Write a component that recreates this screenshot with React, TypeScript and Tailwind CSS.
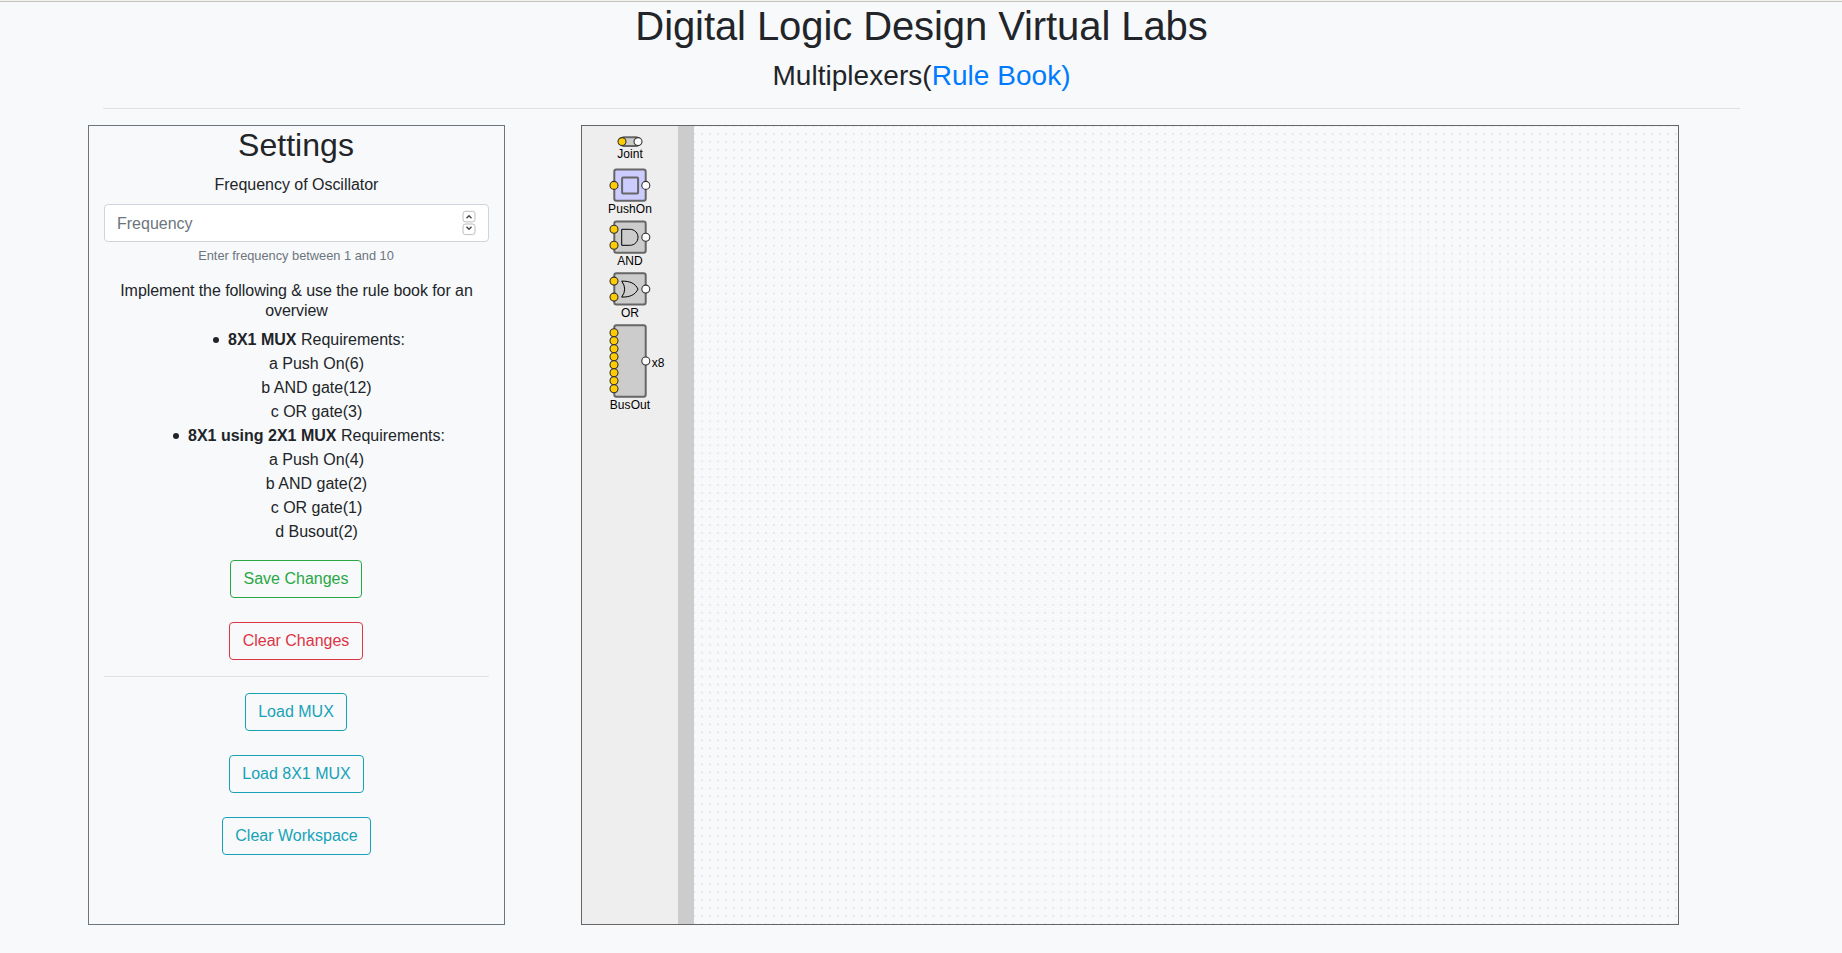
import type { ReactNode } from "react";

type Point = [number, number];

function Node({ at, output }: { at: Point; output?: boolean }) {
  return (
    <circle cx={at[0]} cy={at[1]} r={4} fill={output ? "#ffffff" : "#ffcc00"} stroke="#333333" strokeWidth={1.1} />
  );
}

function Device({ height, label, inputs, output, fill = "#cccccc", body = [1.3, 1.6, 31.4, 31.2], note, children }: {
  height: number;
  label: string;
  inputs: Point[];
  output: Point;
  fill?: string;
  body?: number[];
  note?: string;
  children?: ReactNode;
}) {
  return (
    <div className="relative flex flex-col items-center">
      <svg width={34} height={height} className="block shrink-0 overflow-visible">
        <rect x={body[0]} y={body[1]} width={body[2]} height={body[3]} rx={2} fill={fill} stroke="#666666" strokeWidth={2} />
        {children}
        {inputs.map((p) => <Node key={p[1]} at={p} />)}
        <Node at={output} output />
      </svg>
      <span className="h-[14px] text-[12px] leading-[14px] tracking-[0.08px] text-black">{label}</span>
      {note && <span className="absolute left-[42px] top-[32px] text-[12px] leading-[14px] text-black">{note}</span>}
    </div>
  );
}

function Toolbox() {
  return (
    <div className="flex w-[96px] shrink-0 flex-col items-center bg-[#eeeeee] pt-[10px]">
      <Device height={11} label="Joint" body={[9, 1.3, 16, 8.6]} inputs={[[9, 5.6]]} output={[25, 5.6]} />
      <div className="h-[7px]" />
      <Device height={34} label="PushOn" fill="#ccccff" inputs={[[1, 17.4]]} output={[32.8, 17.4]}>
        <rect x={9.1} y={9.4} width={16} height={16} rx={1} fill="none" stroke="#666666" strokeWidth={2} />
      </Device>
      <div className="h-[4px]" />
      <Device height={34} label="AND" inputs={[[1, 9.3], [1, 25.3]]} output={[32.8, 17.3]}>
        <path d="M8.7 9.3H16.7C22 9.3 25 13.3 25 17.3S22 25.3 16.7 25.3H8.7Z" fill="none" stroke="#000000" />
      </Device>
      <div className="h-[4px]" />
      <Device height={34} label="OR" body={[1.3, 1.3, 31.4, 31.2]} inputs={[[1, 9.1], [1, 25.1]]} output={[32.8, 17.1]}>
        <path d="M8.7 9.1C17 9.1 22 11.1 25 17.1C22 23.1 17 25.1 8.7 25.1Q14.7 17.1 8.7 9.1Z" fill="none" stroke="#000000" />
      </Device>
      <div className="h-[4px]" />
      <Device
        height={74}
        label="BusOut"
        body={[1.3, 1.3, 31.4, 71.4]}
        inputs={[8.8, 16.8, 24.8, 32.8, 40.8, 48.8, 56.8, 64.8].map((y): Point => [1, y])}
        output={[32.8, 37]}
        note="x8"
      />
    </div>
  );
}

function Workspace() {
  return (
    <div className="flex h-[800px] w-[1098px] border border-[#666666]">
      <Toolbox />
      <div className="w-[16px] shrink-0 bg-[#cccccc]" />
      <svg className="block h-full min-w-0 flex-1">
        <defs>
          <pattern id="grid" x="-3.8" y="4" width="7.98" height="7.98" patternUnits="userSpaceOnUse">
            <rect x="3.1" y="3.1" width="1.7" height="1.7" fill="#e0e1e4" />
          </pattern>
        </defs>
        <rect width="100%" height="100%" fill="url(#grid)" />
      </svg>
    </div>
  );
}

const tones = {
  green: "border-[#28a745] text-[#28a745]",
  red: "border-[#dc3545] text-[#dc3545]",
  cyan: "border-[#17a2b8] text-[#17a2b8]",
};

function Button({ tone, width, children }: { tone: keyof typeof tones; width: string; children: string }) {
  return (
    <button className={`h-[38px] rounded border text-base leading-6 ${width} ${tones[tone]}`}>{children}</button>
  );
}

function Requirement({ name }: { name: string }) {
  return (
    <li className="flex items-center justify-center">
      <span className="relative">
        <span className="absolute -left-[15px] top-[9px] size-[6px] rounded-full bg-[#212529]" />
        <b>{name}</b> Requirements:
      </span>
    </li>
  );
}

function Settings() {
  return (
    <section className="flex h-[800px] w-[417px] flex-col border border-[#6c757d] px-[15px] text-center">
      <h2 className="mb-2 pr-px text-[32px] leading-[38.4px] tracking-[0.05px]">Settings</h2>
      <label className="pt-px mb-[7px] leading-6 tracking-[-0.03px]">Frequency of Oscillator</label>
      <div className="flex h-[38px] items-center rounded border border-[#ced4da] bg-white px-3">
        <input className="min-w-0 flex-1 pt-px outline-none placeholder:text-[#6c757d]" placeholder="Frequency" />
        <svg width="15" height="26" viewBox="0 0 15 26" fill="none">
          <rect x="2" y="1.3" width="12" height="10.6" rx="2.5" stroke="#bdbdbd" />
          <rect x="2" y="14" width="12" height="10.6" rx="2.5" stroke="#bdbdbd" />
          <path d="M5.5 8.3L8 5.8L10.5 8.3M5.5 16.8L8 19.3L10.5 16.8" stroke="#444444" strokeWidth="1.4" />
        </svg>
      </div>
      <small className="mt-1 mb-4 pr-px text-[12.8px] leading-[19.2px] text-[#6c757d]">Enter frequency between 1 and 10</small>
      <h6 className="mb-2 leading-[19.7px] -mt-px pt-px tracking-[-0.065px]">Implement the following &amp; use the rule book for an overview</h6>
      <ul className="-mt-px mb-4 pl-10 leading-6">
        <Requirement name="8X1 MUX" />
        <li>a Push On(6)</li>
        <li>b AND gate(12)</li>
        <li>c OR gate(3)</li>
        <Requirement name="8X1 using 2X1 MUX" />
        <li>a Push On(4)</li>
        <li>b AND gate(2)</li>
        <li>c OR gate(1)</li>
        <li>d Busout(2)</li>
      </ul>
      <div className="flex flex-col items-center gap-6 pr-px">
        <Button tone="green" width="w-[132px]">Save Changes</Button>
        <Button tone="red" width="w-[134px]">Clear Changes</Button>
      </div>
      <hr className="my-4 border-[#dfe0e2]" />
      <div className="flex flex-col items-center gap-6">
        <Button tone="cyan" width="w-[102px] mr-px">Load MUX</Button>
        <Button tone="cyan" width="w-[135px]">Load 8X1 MUX</Button>
        <Button tone="cyan" width="w-[149px]">Clear Workspace</Button>
      </div>
    </section>
  );
}

export default function App() {
  return (
    <div className="h-[953px] overflow-hidden bg-[#f8f9fa] font-['Liberation_Sans',sans-serif] text-base text-[#212529]">
      <div className="h-px bg-[#f4f2ee]" />
      <div className="h-px bg-[#c4c2bc]" />
      <header className="ml-[103px] mr-[102px] border-b border-[#dfe0e2] pb-[15px] text-center">
        <h1 className="mb-[9px] text-[40px] leading-[48px] tracking-[-0.085px]">Digital Logic Design Virtual Labs</h1>
        <h2 className="text-[28px] leading-[33.6px] tracking-[0.04px]">
          Multiplexers(<a className="text-[#007bff]" href="#rules">Rule Book)</a>
        </h2>
      </header>
      <main className="mt-4 flex gap-[76px] pl-[88px]">
        <Settings />
        <Workspace />
      </main>
    </div>
  );
}
